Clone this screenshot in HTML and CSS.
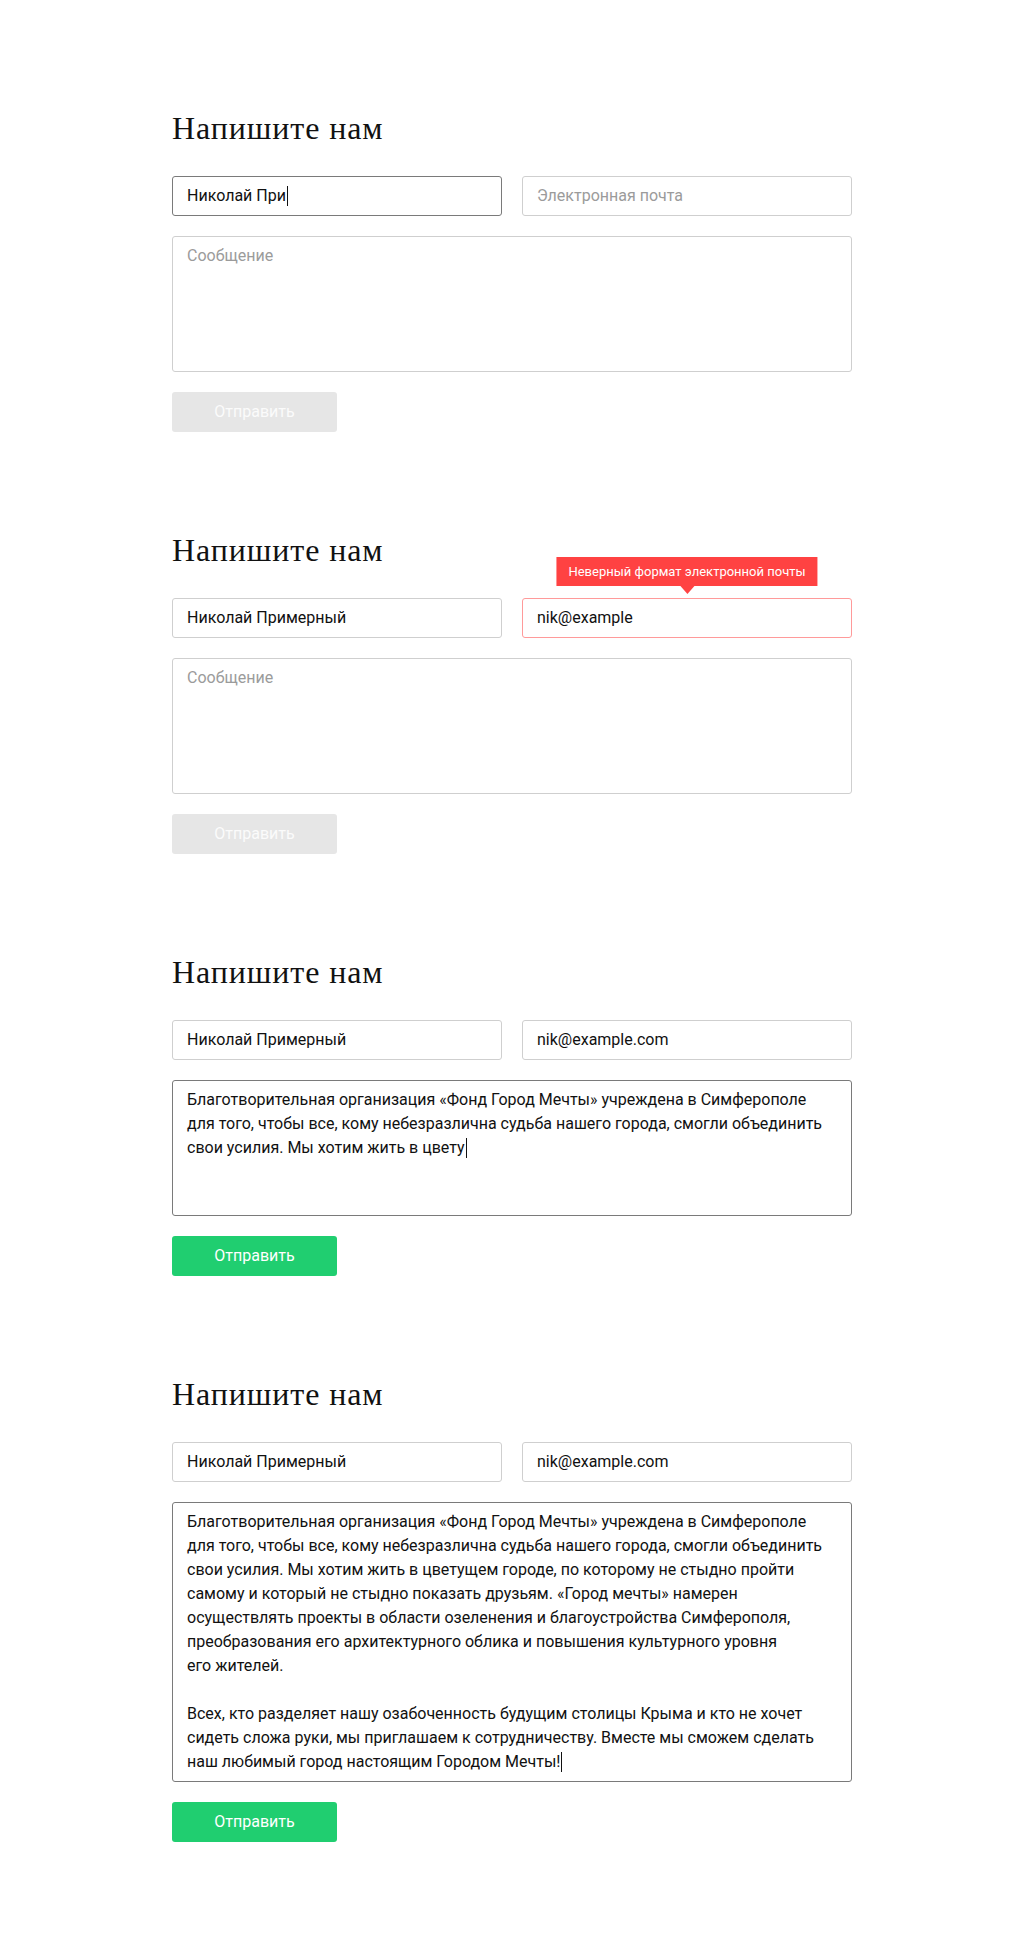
FILE: index.html
```html
<!DOCTYPE html>
<html lang="ru">
<head>
<meta charset="utf-8">
<title>Напишите нам</title>
<link rel="stylesheet" href="styles.css">
</head>
<body>
<main class="page">

  <section class="form">
    <h2 class="title">Напишите нам</h2>
    <div class="row">
      <div class="field is-focus">Николай При<span class="caret"></span></div>
      <div class="field is-empty">Электронная почта</div>
    </div>
    <div class="area is-empty">Сообщение</div>
    <div class="btn is-disabled">Отправить</div>
  </section>

  <section class="form">
    <h2 class="title">Напишите нам</h2>
    <div class="row">
      <div class="field">Николай Примерный</div>
      <div class="field is-error">nik@example
        <div class="tip">Неверный формат электронной почты</div>
      </div>
    </div>
    <div class="area is-empty">Сообщение</div>
    <div class="btn is-disabled">Отправить</div>
  </section>

  <section class="form">
    <h2 class="title">Напишите нам</h2>
    <div class="row">
      <div class="field">Николай Примерный</div>
      <div class="field">nik@example.com</div>
    </div>
    <div class="area is-focus">Благотворительная организация «Фонд Город Мечты» учреждена в Симферополе<br>для того, чтобы все, кому небезразлична судьба нашего города, смогли объединить<br>свои усилия. Мы хотим жить в цвету<span class="caret"></span></div>
    <div class="btn">Отправить</div>
  </section>

  <section class="form">
    <h2 class="title">Напишите нам</h2>
    <div class="row">
      <div class="field">Николай Примерный</div>
      <div class="field">nik@example.com</div>
    </div>
    <div class="area is-focus">Благотворительная организация «Фонд Город Мечты» учреждена в Симферополе<br>для того, чтобы все, кому небезразлична судьба нашего города, смогли объединить<br>свои усилия. Мы хотим жить в цветущем городе, по которому не стыдно пройти<br>самому и который не стыдно показать друзьям. «Город мечты» намерен<br>осуществлять проекты в области озеленения и благоустройства Симферополя,<br>преобразования его архитектурного облика и повышения культурного уровня<br>его жителей.<br><br>Всех, кто разделяет нашу озабоченность будущим столицы Крыма и кто не хочет<br>сидеть сложа руки, мы приглашаем к сотрудничеству. Вместе мы сможем сделать<br>наш любимый город настоящим Городом Мечты!<span class="caret"></span></div>
    <div class="btn">Отправить</div>
  </section>

</main>
</body>
</html>
```

FILE: styles.css
```css
* { box-sizing: border-box; }

html, body {
  margin: 0;
  padding: 0;
  background: #fff;
}

body {
  font-family: Roboto, "Noto Sans", sans-serif;
  font-size: 16px;
  color: #111;
}

.page {
  width: 680px;
  margin: 0 auto;
  padding-top: 110px;
}

.form {
  margin-bottom: 100px;
}

.title {
  margin: 0 0 30px;
  font-family: "Liberation Serif", "Times New Roman", serif;
  font-weight: normal;
  font-size: 32px;
  letter-spacing: 0.9px;
  line-height: 36px;
  color: #111;
}

.row {
  display: flex;
  gap: 20px;
  margin-bottom: 20px;
}

.field {
  position: relative;
  flex: 1;
  height: 40px;
  padding: 0 14px;
  border: 1px solid #cfcfcf;
  border-radius: 3px;
  line-height: 38px;
  white-space: nowrap;
}

.area {
  min-height: 136px;
  padding: 7px 14px;
  border: 1px solid #cfcfcf;
  border-radius: 3px;
  line-height: 24px;
  margin-bottom: 20px;
}

.is-empty { color: #9b9b9b; }

.is-focus { border-color: #7a7a7a; }

.is-error { border-color: #ff9a9a; }

.caret {
  display: inline-block;
  width: 1px;
  height: 20px;
  margin-left: 1px;
  background: #111;
  vertical-align: -5px;
}

.tip {
  position: absolute;
  left: 50%;
  bottom: calc(100% + 13px);
  transform: translateX(-50%);
  padding: 0 12px;
  height: 29px;
  line-height: 29px;
  background: #ff4242;
  color: #fff;
  font-size: 13px;
  white-space: nowrap;
}

.tip::after {
  content: "";
  position: absolute;
  left: 50%;
  top: 100%;
  margin-left: -7px;
  border-left: 7px solid transparent;
  border-right: 7px solid transparent;
  border-top: 8px solid #ff4242;
}

.btn {
  width: 165px;
  height: 40px;
  border-radius: 3px;
  background: #20ce70;
  color: #fff;
  text-align: center;
  line-height: 40px;
}

.btn.is-disabled {
  background: #e6e6e6;
  color: #fbfbfb;
}
```
